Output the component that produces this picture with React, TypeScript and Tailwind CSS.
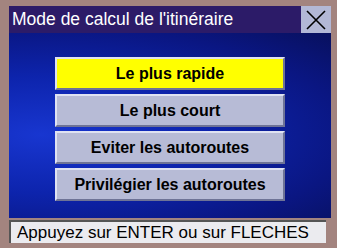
import React from 'react';

const OPTIONS = ['Le plus rapide', 'Le plus court', 'Eviter les autoroutes', 'Privilégier les autoroutes'];

export default function App() {
  const font = { fontFamily: '"Liberation Sans", Arial, sans-serif' };
  return (
    <div
      className="flex h-[248px] w-[337px] flex-col bg-[#a3847f] pb-[5px] pl-[9px] pr-[6px] pt-[6px]"
      style={font}
    >
      <div className="flex h-[27px] shrink-0 bg-[#2c1b68]">
        <div className="flex flex-1 items-center pl-[3px] pt-[1px] text-[17.5px] leading-none text-white">
          Mode de calcul de l'itinéraire
        </div>
        <div className="flex w-[30px] items-center justify-center bg-[#b3b8d6]">
          <svg width="22" height="22" viewBox="0 0 22 22">
            <path d="M2 2 L20 20 M20 2 L2 20" stroke="#000" strokeWidth="1.6" fill="none" />
          </svg>
        </div>
      </div>
      <div className="flex flex-1 flex-col items-center gap-[4px] bg-[radial-gradient(ellipse_at_10%_55%,#1836d0_0%,#0d24ad_40%,#0a1682_75%,#08105e_100%)] pt-[24px]">
        {OPTIONS.map((label, i) => (
          <div
            key={label}
            className={`flex h-[33px] w-[230px] items-center justify-center border-2 border-b-[#6e7396] border-l-[#dfe2f2] border-r-[#6e7396] border-t-[#dfe2f2] text-[16px] font-bold text-black ${
              i === 0 ? 'bg-[#ffff00]' : 'bg-[#b7bbd6]'
            }`}
          >
            {label}
          </div>
        ))}
      </div>
      <div className="mt-[2px] mr-[5px] flex h-[23px] shrink-0 items-center border-l-2 border-t-2 border-l-[#555] border-t-[#555] bg-[#ebebef] pl-[6px] text-[17px] leading-none text-black">
        Appuyez sur ENTER ou sur FLECHES
      </div>
    </div>
  );
}
